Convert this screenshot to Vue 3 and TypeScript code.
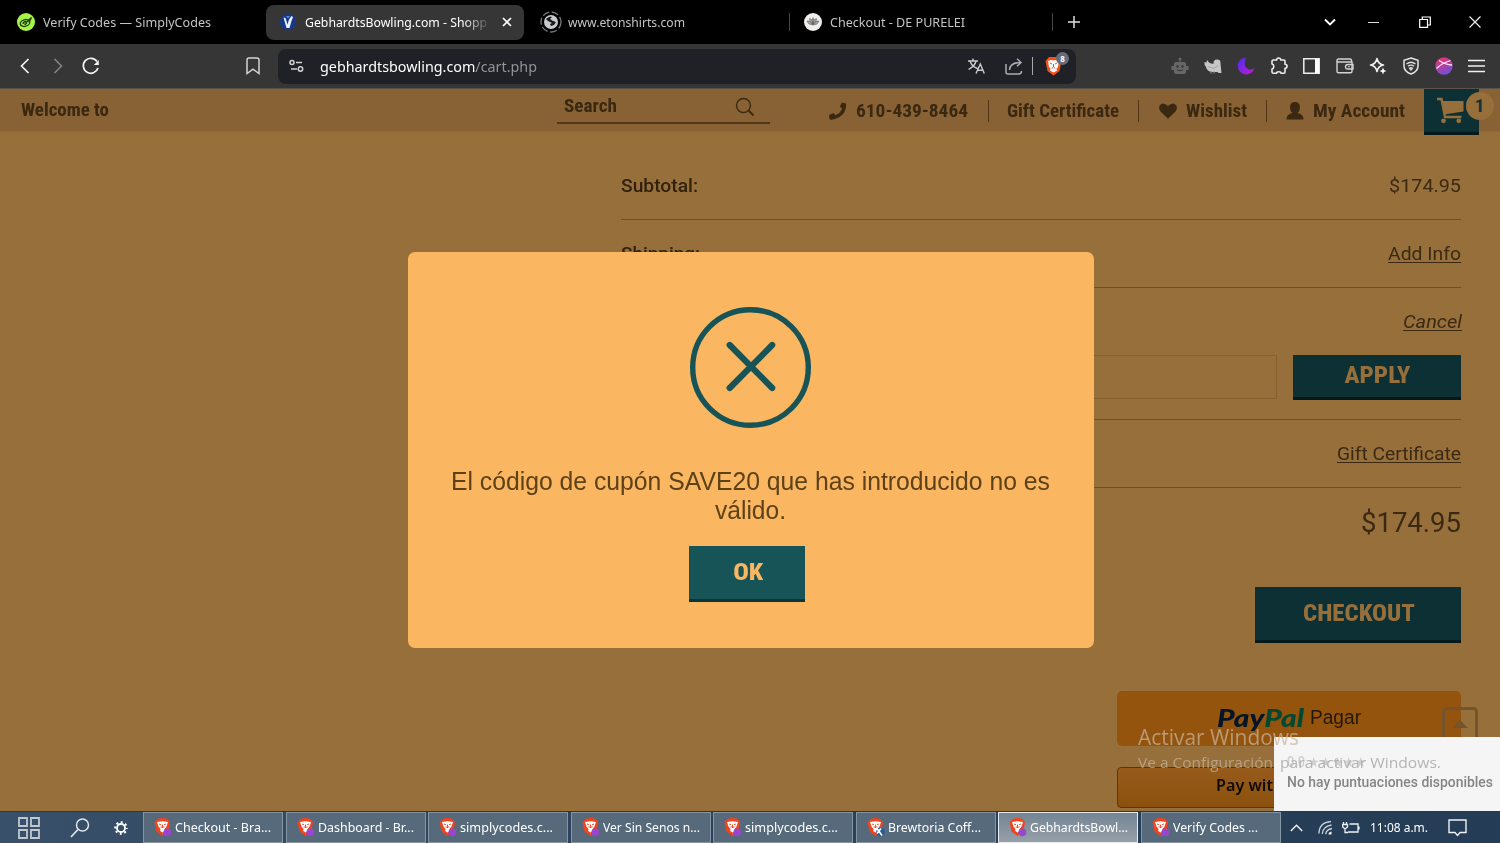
<script setup lang="ts">
import type { Directive } from 'vue'

// Condenses or widens a line of text so that it takes exactly the given width.
const vFit: Directive<HTMLElement, number> = {
  mounted(el, { value }) {
    const natural = el.getBoundingClientRect().width
    el.style.width = `${value}px`
    el.style.transform = `scaleX(${value / natural})`
  },
}

interface Task { label: string; w: number; active?: boolean; mark?: boolean }
const tasks: Task[] = [
  { label: 'Checkout - Bra...', w: 96 },
  { label: 'Dashboard - Br...', w: 96 },
  { label: 'simplycodes.c...', w: 93 },
  { label: 'Ver Sin Senos n...', w: 97 },
  { label: 'simplycodes.c...', w: 93 },
  { label: 'Brewtoria Coff...', w: 93, mark: true },
  { label: 'GebhardtsBowl...', w: 98, active: true },
  { label: 'Verify Codes ...', w: 85 },
]
</script>

<template>
  <div class="screen">
    <header class="tabs">
      <div class="tab t1">
        <svg width="18" height="18" viewBox="0 0 18 18"><circle cx="9" cy="9" r="9" fill="#a4f44c" /><g fill="none" stroke="#24420f" stroke-width="1.4"><ellipse cx="8" cy="10" rx="4.8" ry="3.300" transform="rotate(-15 8 10)" /><path d="M6 11c0-2.500 3-3 3.500-1.500s-2 2.500-2 1M8.500 10l6-5.500-2.500 5" /></g></svg>
        <span v-fit="168" class="ft">Verify Codes — SimplyCodes</span>
      </div>
      <div class="tab t2">
        <svg width="16" height="16" viewBox="0 0 16 16"><circle cx="8" cy="8" r="8" fill="#17388a" /><path d="M3.500 3.500l2 .500 2 6.500 1.500-5 2.500-3.500 1.500 1-1.500 4-2 7h-3z" fill="#e9f1fc" /><path d="M6 2l2 2.500L10 2z" fill="#5c86d8" /></svg>
        <div class="clip"><span v-fit="182" class="ft">GebhardtsBowling.com - Shopp</span></div>
        <svg class="x" width="10" height="10" viewBox="0 0 10 10"><path d="M1 1l8 8M9 1l-8 8" stroke="#fff" stroke-width="1.700" /></svg>
      </div>
      <div class="tab t3">
        <svg width="22" height="22" viewBox="0 0 22 22"><circle cx="11" cy="11" r="10" fill="none" stroke="#77797b" stroke-width="1.300" stroke-dasharray="7 2.500" /><circle cx="11" cy="11" r="7" fill="#c9cacc" /><path d="M6 8c2-1 3-3 6-2l-2 2 3 2 3 1-2 3-3 1-1-2 2-1-4-2z" fill="#18191b" /></svg>
        <span v-fit="117" class="ft">www.etonshirts.com</span>
      </div>
      <div class="tab t4">
        <svg width="18" height="18" viewBox="0 0 18 18"><circle cx="9" cy="9" r="9" fill="#efeeec" /><path d="M3 8q3-1 6 4-5 0-6-4zM15 8q-3-1-6 4 5 0 6-4zM5.500 5.500Q9 6 9 11 5 9 5.500 5.500zM12.500 5.500Q9 6 9 11q4-2 3.500-5.500zM9 4.500q2 3 0 7-2-4 0-7z" fill="#aaa" stroke="#555" stroke-width=".5" /></svg>
        <span v-fit="135" class="ft">Checkout - DE PURELEI</span>
      </div>
      <div class="plus"><svg width="12" height="12" viewBox="0 0 12 12"><path d="M6 0v12M0 6h12" stroke="#ddd" stroke-width="1.500" /></svg></div>
      <div class="win">
        <svg width="12" height="8" viewBox="0 0 12 8"><path d="M1 1.500l5 5 5-5" fill="none" stroke="#fff" stroke-width="1.900" /></svg>
        <svg width="12" height="12" viewBox="0 0 12 12"><path d="M0 6.500h11" stroke="#ddd" /></svg>
        <svg width="12" height="12" viewBox="0 0 12 12"><path d="M.7 3.500h7.800v7.800H.7zM3.300 3.300V1h8v8H8.600" fill="none" stroke="#fff" stroke-width="1.200" /></svg>
        <svg width="12" height="12" viewBox="0 0 12 12"><path d="M.5.500l11 11M11.500.500l-11 11" stroke="#eee" stroke-width="1.200" /></svg>
      </div>
    </header>

    <nav class="tools">
      <div class="hist">
        <svg width="10" height="16" viewBox="0 0 10 16"><path d="M8.500 1L1.500 8l7 7" fill="none" stroke="#f4f4f4" stroke-width="1.700" /></svg>
        <svg width="10" height="16" viewBox="0 0 10 16"><path d="M1.500 1l7 7-7 7" fill="none" stroke="#868686" stroke-width="1.500" /></svg>
        <svg width="18" height="18" viewBox="0 0 18 18"><path d="M15 4.500A7.500 7.500 0 1 0 16 11" fill="none" stroke="#f4f4f4" stroke-width="1.700" /><path d="M16.800 3v5h-5z" fill="#f4f4f4" /></svg>
      </div>
      <svg class="mark" width="14" height="18" viewBox="0 0 14 18"><path d="M1 3q0-2 2-2h8q2 0 2 2v13.500l-6-4.300-6 4.300z" fill="none" stroke="#d4d4d4" stroke-width="1.500" /></svg>
      <div class="omni">
        <svg class="tune" width="15" height="14" viewBox="0 0 15 14"><g fill="none" stroke="#d0d2d6" stroke-width="1.500"><circle cx="3" cy="3.500" r="2" /><path d="M7 3.500h6M2 10h6" /><circle cx="11.500" cy="10" r="2.200" /></g></svg>
        <span v-fit="217" class="ft url">gebhardtsbowling.com<i>/cart.php</i></span>
        <svg class="tr" width="17" height="16" viewBox="0 0 17 16"><path d="M0 3h10M5 .500V3M2 3q2 6 7.500 7.500M8 3Q7 8 .500 11.500M8 15.500L12.300 6l4 9.500M9.500 12.300h5.500" fill="none" stroke="#c9cbd0" stroke-width="1.400" /></svg>
        <svg class="sh" width="18" height="17" viewBox="0 0 18 17"><path d="M1 6v8q0 2 2 2h11q2.500 0 2.500-3M4.500 12q.5-7.500 11-7.500M12 .800l4 3.700-4 3.700" fill="none" stroke="#aaacb1" stroke-width="1.500" /></svg>
        <span class="bar"></span>
        <div class="shield">
          <svg width="17" height="20" viewBox="0 0 17 20"><path d="M4 1h9l3.500 4-2 10-6 4.500-6-4.500L.5 5z" fill="#f4511c" /><path d="M3 5l3-1 2.500.5L11 4l3 1-1 6-1.500 1.500.5 2-3.500 2-3.500-2 .5-2L4 11z" fill="#fff" /><path d="M5 7l2 1M12 7l-2 1M8.500 8v3l-1.800 1.500M8.500 11l1.800 1.500" fill="none" stroke="#f4511c" /></svg>
          <b>8</b>
        </div>
      </div>
      <div class="ext">
        <i><svg width="18" height="18" viewBox="0 0 18 18"><circle cx="9" cy="2" r="1.500" fill="#666" /><path d="M8.400 2h1.200v3H13q2 0 2 2v2h2.500v4H15v2q0 2-2 2H5q-2 0-2-2v-2H.500V9H3V7q0-2 2-2h3.400z" fill="#666" /><circle cx="6.500" cy="9.500" r="1.200" fill="#393939" /><circle cx="11.500" cy="9.500" r="1.200" fill="#393939" /><path d="M6 12.800q3 2 6 0" stroke="#393939" fill="none" /></svg></i>
        <i><svg width="18" height="16" viewBox="0 0 18 16"><path d="M.500 4l2 .5.500-2.500 2.500 3 4 1Q9 1.500 13 1.500t3.500 4l1 9.500h-3l-1-1H8Q3 13.500 2 9 0 7 .500 4z" fill="#c6c6c6" /><path d="M7 13v2.500M10 13v2.500" stroke="#999" /><path d="M4 8.500l6 2 4-3" stroke="#a5a5a5" fill="none" /></svg></i>
        <i><svg width="18" height="18" viewBox="0 0 18 18"><defs><linearGradient id="moon" x1="0" y1="0" x2="1" y2="1"><stop stop-color="#4a2df2" /><stop offset="1" stop-color="#c51bd0" /></linearGradient></defs><path d="M9 .500A8.500 8.500 0 1 0 17.500 11Q13 14 9.500 11T9 .500z" fill="url(#moon)" /></svg></i>
        <i><svg width="18" height="18" viewBox="0 0 18 18"><path d="M3.500 3h3.200q0-2 2-2t2 2H14q1 0 1 1v3.200q2 0 2 2t-2 2V15q0 1.300-1 1.300h-3q0-1.600-2.200-1.600T6.600 16.300H3.500q-1.500 0-1.500-1.300v-3q1.800-.3 1.800-2.500T2 7V4q0-1 1.500-1z" fill="none" stroke="#ececec" stroke-width="1.600" stroke-linejoin="round" /></svg></i>
        <i><svg width="17" height="16" viewBox="0 0 17 16"><path d="M.800.800h15.400v14.400H.800z" fill="none" stroke="#eee" stroke-width="1.500" /><path d="M12 1h4v14h-4z" fill="#fff" /></svg></i>
        <i><svg width="18" height="16" viewBox="0 0 18 16"><g fill="none" stroke="#d4d4d4" stroke-width="1.400"><path d="M15.500 4V2.500q0-1.500-1.500-1.500H2.500Q1 1 1 2.500v10.700q0 1.500 1.500 1.500h12q1.500 0 1.500-1.500V4H1.500" /><path d="M17 6.500h-5q-2.500 0-2.500 2.300T12 11h5z" /></g><path d="M12 8.800h2" stroke="#ddd" /></svg></i>
        <i><svg width="18" height="18" viewBox="0 0 18 18"><path d="M8 1.500q1 5.500 6.500 6.500Q9 9 8 14.500 7 9 1.500 8 7 7 8 1.500z" fill="none" stroke="#eee" stroke-width="1.600" stroke-linejoin="round" /><path d="M14 10.500l1 2.500 2.500 1-2.500 1-1 2.500-1-2.500-2.500-1 2.500-1z" fill="#fff" /></svg></i>
        <i><svg width="16" height="18" viewBox="0 0 16 18"><path d="M8 1l7 2.300V9q0 5.500-7 8Q1 14.500 1 9V3.300z" fill="none" stroke="#e4e4e4" stroke-width="1.500" /><path d="M3.500 7q4.500-3.500 9 0M5 9.200q3-2.300 6 0M6.500 11.200q1.500-1.200 3 0L8 13z" fill="none" stroke="#ddd" stroke-width="1.300" /></svg></i>
        <i><svg width="18" height="18" viewBox="0 0 18 18"><defs><linearGradient id="orb" x1=".3" y1="0" x2=".7" y2="1"><stop stop-color="#e8336c" /><stop offset="1" stop-color="#6b50e0" /></linearGradient></defs><circle cx="9" cy="9" r="8.700" fill="url(#orb)" /><path d="M1.500 11.500Q7 6 15.500 3.500M4 3.500q6 4 13 4.500" stroke="#ffe3f0" stroke-width="1.300" fill="none" /></svg></i>
        <i><svg width="17" height="14" viewBox="0 0 17 14"><path d="M0 1.500h17M0 7h17M0 12.500h17" stroke="#f0f0f0" stroke-width="1.600" /></svg></i>
      </div>
    </nav>

    <main class="page">
      <div class="top">
        <span v-fit="88" class="ft rc welcome">Welcome to</span>
        <div class="search">
          <span v-fit="53" class="ft rc">Search</span>
          <svg width="20" height="20" viewBox="0 0 20 20"><circle cx="8.500" cy="8.500" r="7" fill="none" stroke="#3b2912" stroke-width="1.400" /><path d="M13.500 13.500l5 5" stroke="#3b2912" stroke-width="2" /></svg>
        </div>
        <div class="links">
          <div class="lk phone"><svg width="18" height="18" viewBox="0 0 18 18"><path d="M13 .500l4 1Q18 14 4 17.500q-3 .5-3.500-.5L0 13l4.500-2 2 2.300Q11.500 11 13 6.500L10.800 4.500z" fill="#3b2811" /></svg><span v-fit="112" class="ft rc">610-439-8464</span></div>
          <div class="lk gift"><span v-fit="112" class="ft rc">Gift Certificate</span></div>
          <div class="lk wish"><svg width="18" height="16" viewBox="0 0 18 16"><path d="M9 15.800L1.500 8.500Q-1 5 1 2 4.500-1.500 9 3q4.500-4.500 8-1 2 3-.5 6.500z" fill="#3b2811" /></svg><span v-fit="61" class="ft rc">Wishlist</span></div>
          <div class="lk acct"><svg width="18" height="18" viewBox="0 0 18 18"><path d="M9 0q5 0 5 5.500 0 3.500-2.500 5.500 6 1 6 6.500H.500Q.500 12 6.500 11 4 9 4 5.500 4 0 9 0z" fill="#3b2811" /></svg><span v-fit="92" class="ft rc">My Account</span></div>
        </div>
        <div class="cart">
          <svg width="29" height="27" viewBox="0 0 29 27"><path d="M1 2h4.500L9 20h16.500" fill="none" stroke="#966f3b" stroke-width="2.400" /><path d="M6 4h21.500v10.500L8 17.500z" fill="#966f3b" /><circle cx="7.500" cy="23.800" r="2.400" fill="#966f3b" /><circle cx="22.800" cy="23.800" r="2.400" fill="#966f3b" /></svg>
          <b class="rc">1</b>
        </div>
      </div>

      <section class="sum">
        <div class="row"><strong v-fit="77" class="ft">Subtotal:</strong><span v-fit="72" class="ft">$174.95</span></div>
        <div class="row"><strong v-fit="79" class="ft">Shipping:</strong><u v-fit="73" class="ft">Add Info</u></div>
        <div class="coupon">
          <div class="line"><u v-fit="59" class="ft it">Cancel</u></div>
          <div class="form"><div class="field"></div><button class="btn rc"><span v-fit="66" class="ft">APPLY</span></button></div>
        </div>
        <div class="row end"><u v-fit="124" class="ft">Gift Certificate</u></div>
        <div class="total"><span v-fit="100" class="ft">$174.95</span></div>
        <button class="btn rc checkout"><span v-fit="112" class="ft">CHECKOUT</span></button>
        <div class="pp"><em><span v-fit="87" class="ft">Pay<i>Pal</i></span></em><span v-fit="51" class="ft pagar">Pagar</span></div>
        <div class="az"><span v-fit="57" class="ft">Pay wit</span></div>
      </section>

      <svg class="up" width="36" height="36" viewBox="0 0 36 36"><rect x="1.500" y="1.500" width="33" height="33" rx="3" fill="none" stroke="#75532d" stroke-width="3" /><path d="M10 21l8-8 8 8z" fill="#75532d" /></svg>

      <div class="modal">
        <svg class="err" width="121" height="121" viewBox="0 0 121 121"><g fill="none" stroke="#165457"><circle cx="60.500" cy="60.500" r="57.800" stroke-width="5.400" /><path d="M39.700 38l42.500 43M82.200 38l-42.500 43" stroke-width="6.200" stroke-linecap="round" /></g></svg>
        <p><span v-fit="599" class="ft">El código de cupón SAVE20 que has introducido no es</span><span v-fit="71" class="ft">válido.</span></p>
        <button class="btn rc ok"><span v-fit="30" class="ft">OK</span></button>
      </div>

      <aside class="pop"><span v-fit="80" class="ft stars">0.0 ★★★★★</span><span v-fit="206" class="ft">No hay puntuaciones disponibles</span></aside>
      <div class="wm"><span v-fit="161" class="ft big">Activar Windows</span><span class="sm"><span v-fit="135" class="ft">Ve a Configuración</span><span v-fit="161" class="ft dark">para activar Windows.</span></span></div>
    </main>

    <footer class="task">
      <svg class="grid" width="22" height="22" viewBox="0 0 22 22"><path d="M1 1h8v8H1zM13 1h8v8h-8zM1 13h8v8H1zM13 13h8v8h-8z" fill="none" stroke="#c0c7cd" stroke-width="1.800" /></svg>
      <svg class="find" width="20" height="20" viewBox="0 0 20 20"><circle cx="12.500" cy="7" r="6" fill="none" stroke="#e2e7ea" stroke-width="1.500" /><path d="M8 11.500L1 19" stroke="#e2e7ea" stroke-width="1.700" /></svg>
      <svg class="gear" width="14" height="14" viewBox="0 0 14 14"><circle cx="7" cy="7" r="4" fill="none" stroke="#fff" stroke-width="1.800" /><circle cx="7" cy="7" r="5.800" fill="none" stroke="#fff" stroke-width="2" stroke-dasharray="2 2.555" stroke-dashoffset="1" /></svg>
      <div class="btns">
        <div v-for="(t, i) in tasks" :key="i" class="tb" :class="{ on: t.active }">
          <svg width="18" height="19" viewBox="0 0 18 19"><path d="M4.500.500l4-.5 4 .500 3.500 3-1.500 10-6 4.500-6-4.500L.500 4z" fill="#ee4420" /><path d="M3 4l5.500-.800L14 4l-1.500 4.500-2 2.500.3 2-2.300 1.500L6.200 13l.3-2-2-2.500z" fill="#fff" /><path d="M5 6l2 .700M12 6l-2 .700M8.500 6.500v3.500M6.500 9h4" stroke="#ee4420" stroke-width=".9" /><circle v-if="!t.mark" cx="13.300" cy="14.300" r="3.900" fill="#9547cf" /><template v-else><circle cx="13.500" cy="14" r="4.300" fill="#1c5f9e" /><path d="M10 10.500l5 7M14 10.500l-4 5" stroke="#fff" stroke-width="1.700" /></template></svg>
          <span v-fit="t.w" class="ft">{{ t.label }}</span>
        </div>
      </div>
      <svg class="car" width="13" height="8" viewBox="0 0 13 8"><path d="M.800 7l5.700-5.700L12.200 7" fill="none" stroke="#f1f3f5" stroke-width="1.400" /></svg>
      <svg class="wifi" width="15" height="15" viewBox="0 0 15 15"><g fill="none" stroke="#c8d0d8" stroke-width="1.300"><path d="M1 13.500Q1 2.500 13 1.500M4.300 14Q4.500 6.500 13.500 5M7.700 14.300Q8 9.500 14 8.500" /></g><path d="M10.500 14.500q0-2.500 3-3v3z" fill="#fff" /></svg>
      <svg class="bat" width="18" height="12" viewBox="0 0 18 12"><path d="M7.500 2h8.500v8H6M17 4.500v3M1.500 0v2.500M4.500 0v2.500M.700 2.500h4.800v2.500L3 7 .700 5zM3 6.500v4h3" fill="none" stroke="#eef1f3" stroke-width="1.300" /></svg>
      <span v-fit="58" class="ft clock">11:08 a.m.</span>
      <svg class="note" width="19" height="18" viewBox="0 0 19 18"><path d="M1 1h17v12.500h-6L9.500 16.500 7 13.500H1z" fill="none" stroke="#f0f2f4" stroke-width="1.400" /></svg>
    </footer>
  </div>
</template>

<style>
body { margin: 0; overflow: hidden; }
</style>
<style scoped>
.screen { width: 1500px; height: 843px; overflow: hidden; display: flex; flex-direction: column; font-family: "Noto Sans", "Open Sans", sans-serif; font-size: 13px; }
.screen * { box-sizing: border-box; }
svg { display: block; flex: none; overflow: visible; }
.ft { display: inline-block; flex: none; white-space: nowrap; transform-origin: 0 50%; }
.rc { font-family: "Roboto Condensed", Roboto, sans-serif; font-weight: 700; font-stretch: 75%; }
.tabs { height: 44px; flex: none; background: #000; display: flex; align-items: center; color: #c4c4c4; }
.tab { display: flex; align-items: center; height: 35px; flex: none; }
.t1 { width: 266px; padding-left: 17px; gap: 8px; }
.t2 { width: 258px; background: #363636; border-radius: 8px; padding-left: 14px; gap: 9px; color: #fff; }
.clip { width: 182px; display: flex; -webkit-mask-image: linear-gradient(90deg, #000 158px, transparent 186px); mask-image: linear-gradient(90deg, #000 158px, transparent 186px); }
.x { margin-left: 6px; }
.t3 { width: 266px; padding-left: 16px; gap: 6px; }
.t4 { width: 263px; padding-left: 14px; gap: 8px; }
.t3, .t4 { background: linear-gradient(#474747, #474747) right center / 1px 18px no-repeat; }
.plus { width: 40px; display: flex; justify-content: center; padding-left: 2px; }
.win { display: grid; grid-template-columns: 44px 44px 57px 44px; justify-items: center; align-items: center; margin-left: 215px; flex: none; }
.win { grid-template-columns: 50px 38px 63px 38px; margin-left: 212px; }
.tools { height: 45px; flex: none; background: #363636; border-bottom: 1px solid #5a5148; display: flex; align-items: center; }
.hist { display: flex; align-items: center; width: 246px; padding-left: 20px; gap: 23px; }
.hist svg:last-child { margin-left: -4px; }
.omni { width: 798px; height: 35px; margin-left: 18px; border-radius: 8px; background: #202126; display: flex; align-items: center; flex: none; padding-left: 11px; }
.url { margin-left: 16px; font-size: 15px; color: #fff; }
.url i { font-style: normal; color: #929397; }
.tr { margin-left: 431px; }
.sh { margin-left: 20px; }
.bar { width: 1px; height: 18px; background: #aaa; margin-left: 9px; }
.shield { position: relative; margin-left: 12px; }
.shield b { position: absolute; left: 11px; top: -4px; width: 13px; height: 13px; border-radius: 50%; background: #676a78; color: #fff; font-size: 8px; line-height: 13px; text-align: center; }
.ext { display: grid; grid-template-columns: repeat(10, 33px); margin-left: 87px; }
.ext i { display: flex; justify-content: center; align-items: center; }
.page { position: relative; height: 722px; flex: none; background: #966f3b; overflow: hidden; }
.top { height: 43px; background: #886234; border-bottom: 1px solid #8f693a; display: flex; color: #3b2811; font-size: 19px; line-height: 22px; }
.welcome { margin: 10px 0 0 21px; height: 22px; }
.search { width: 213px; height: 35px; margin-left: 448px; padding: 6px 15px 0 7px; border-bottom: 2px solid #523618; display: flex; justify-content: space-between; }
.search svg { margin-top: 2px; }
.links { display: flex; align-items: center; height: 22px; margin-top: 11px; }
.lk { display: flex; align-items: center; height: 22px; border-right: 1px solid #4d3416; gap: 9px; }
.phone { margin-left: 59px; width: 160px; gap: 9px; }
.gift { width: 150px; padding-left: 18px; }
.wish { width: 128px; padding-left: 20px; }
.acct { width: 157px; padding-left: 19px; border: 0; }
.cart { position: relative; width: 55px; height: 46px; background: #0c3033; border-bottom: 3px solid #05191d; padding: 8px 0 0 12px; flex: none; z-index: 1; }
.cart b { position: absolute; left: 42px; top: 3px; width: 28px; height: 28px; border-radius: 50%; background: #966f3b; color: #103437; font-size: 19px; line-height: 27px; text-align: center; padding-right: 1px; }
.sum { width: 840px; margin: 20px 0 0 621px; font: 19px/22px Roboto, sans-serif; color: #3b2912; }
.row { height: 68px; display: flex; align-items: center; justify-content: space-between; border-bottom: 1px solid #754d20; }
.row strong { font-weight: 500; color: #32210d; }
.end { justify-content: flex-end; }
u { text-decoration-thickness: 1px; text-underline-offset: 2px; }
.it { font-style: italic; }
.coupon { height: 132px; border-bottom: 1px solid #754d20; padding-top: 23px; }
.line { display: flex; justify-content: flex-end; height: 44px; margin-right: -1px; }
.form { display: flex; gap: 16px; }
.field { flex: 1; height: 44px; border: 1px solid #87602f; }
.btn { width: 168px; height: 45px; border: 0; border-bottom: 3px solid #05191d; background: #0c3033; color: #966f3b; font-size: 24px; font-weight: 800; line-height: 28px; padding: 0 3px 2px 0; display: flex; justify-content: center; align-items: center; }
.total { height: 99px; padding-top: 17px; display: flex; justify-content: flex-end; font-size: 27px; line-height: 36px; }
.checkout { width: 206px; height: 56px; margin-left: auto; }
.pp { width: 344px; height: 55px; border-radius: 5px; margin: 48px 0 0 auto; background: #95540d; display: flex; align-items: center; padding: 0 0 3px 100px; gap: 6px; }
.pp em { font: italic 900 25px/28px Lato, "Open Sans", sans-serif; color: #031526; }
.pp i { color: #054831; }
.pagar { font: 20px/24px "Liberation Sans", Arial, sans-serif; color: #24180a; }
.az { width: 344px; height: 41px; margin: 21px 0 0 auto; border: 1px solid #58360e; border-radius: 4px; background: linear-gradient(#975c1c, #8b500c); font: 600 16px/20px "Noto Sans", sans-serif; color: #100b06; padding: 7px 0 0 98px; }
.up { position: absolute; left: 1442px; top: 618px; }
.modal { position: absolute; left: 408px; top: 163px; width: 686px; height: 396px; border-radius: 7px; background: #fab660; display: flex; flex-direction: column; align-items: center; padding: 55px 2px 0 0; }
.modal p { margin: 39px 0 0; font: 26px/29px "Liberation Sans", Arial, sans-serif; color: #5d4118; display: flex; flex-direction: column; align-items: center; }
.ok { width: 116px; height: 56px; margin: 21px 6px 0 0; background: #165457; border-color: #08363b; color: #fab660; padding: 0 0 2px; }
.pop { position: absolute; left: 1274px; top: 648px; width: 226px; height: 74px; background: #f5f5f5; padding: 15px 0 0 13px; font: 500 14px/20px Roboto, sans-serif; color: #858585; display: flex; flex-direction: column; align-items: flex-start; }
.stars { color: #cfcfcf; }
.wm { position: absolute; left: 1138px; top: 634px; color: rgba(198, 182, 160, .72); display: flex; flex-direction: column; align-items: flex-start; font-family: "Open Sans", sans-serif; }
.big { font-size: 21px; line-height: 29px; }
.sm { display: flex; gap: 7px; font-size: 15px; line-height: 20px; }
.dark { color: #b4b4b4; }
.task { height: 32px; flex: none; background: linear-gradient(90deg, #385069, #2c435b 40%, #243c55); display: flex; align-items: center; color: #fff; font-size: 12px; border-top: 1px solid #26394b; }
.grid { margin-left: 18px; }
.find { margin-left: 30px; }
.gear { margin-left: 24px; }
.btns { display: flex; gap: 2.500px; margin-left: 15px; }
.tb { width: 140px; height: 31px; background: #566a7c; border: 1px solid #8496a4; display: flex; align-items: center; padding-left: 10px; gap: 3px; flex: none; }
.on { background: linear-gradient(#748493, #96a0aa); border-color: #e7ebee; }
.car { margin-left: 9px; }
.wifi { margin-left: 15px; }
.bat { margin-left: 9px; }
.clock { margin-left: 10px; }
.note { margin-left: 20px; }
</style>
